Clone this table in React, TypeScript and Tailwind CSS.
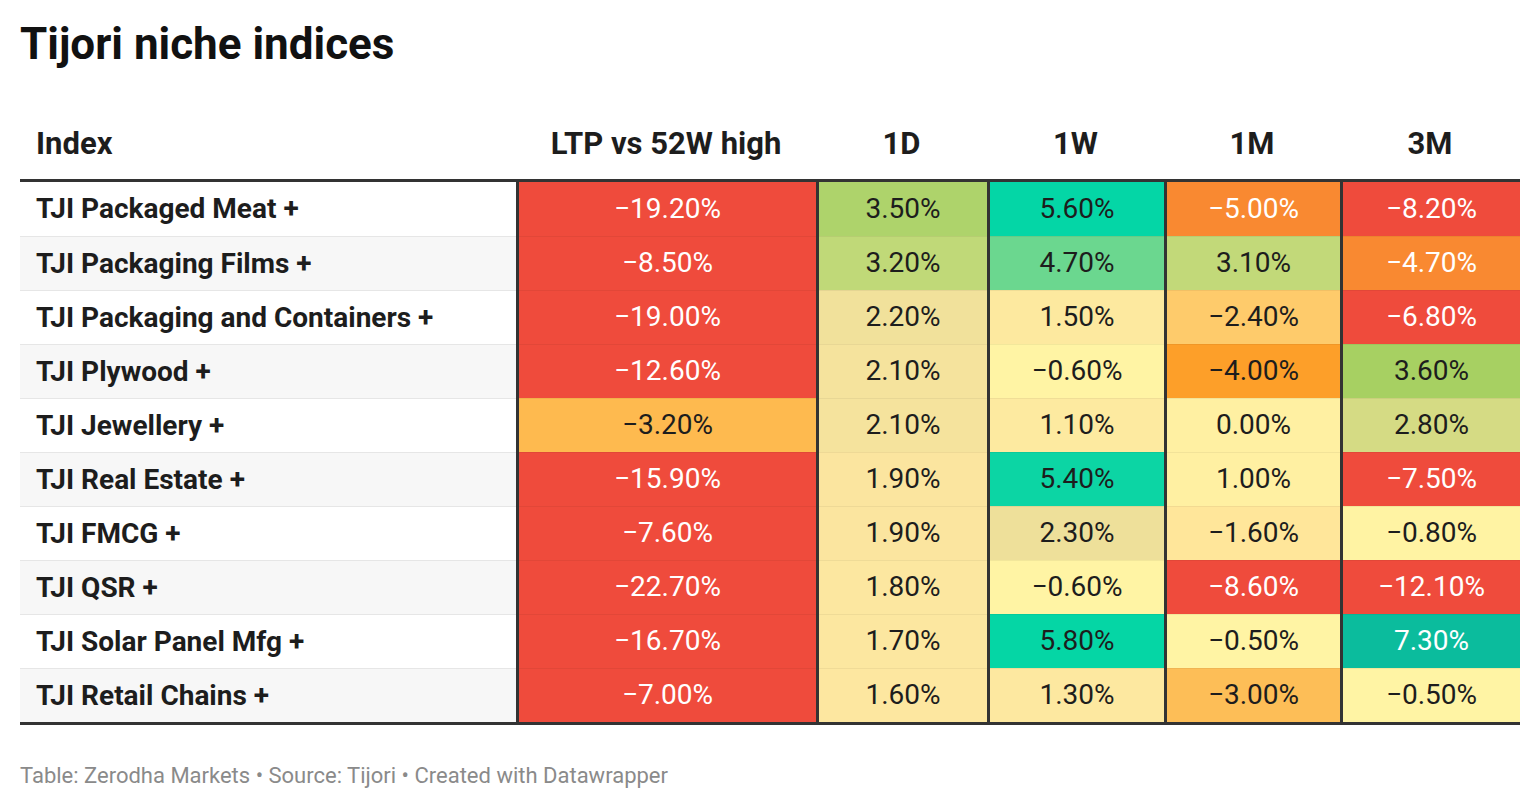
import React from "react";

type Cell = { v: string; bg: string; light?: boolean };

const RED = "#ef4b3c";
const ORANGE = "#f98931";

const rows: { name: string; cells: Cell[] }[] = [
  {
    name: "TJI Packaged Meat +",
    cells: [
      { v: "−19.20%", bg: RED, light: true },
      { v: "3.50%", bg: "#aed36b" },
      { v: "5.60%", bg: "#04d6a6" },
      { v: "−5.00%", bg: ORANGE, light: true },
      { v: "−8.20%", bg: RED, light: true },
    ],
  },
  {
    name: "TJI Packaging Films +",
    cells: [
      { v: "−8.50%", bg: RED, light: true },
      { v: "3.20%", bg: "#c0d978" },
      { v: "4.70%", bg: "#6bd78f" },
      { v: "3.10%", bg: "#c2d979" },
      { v: "−4.70%", bg: ORANGE, light: true },
    ],
  },
  {
    name: "TJI Packaging and Containers +",
    cells: [
      { v: "−19.00%", bg: RED, light: true },
      { v: "2.20%", bg: "#f1e19b" },
      { v: "1.50%", bg: "#fde99f" },
      { v: "−2.40%", bg: "#fecb6b" },
      { v: "−6.80%", bg: RED, light: true },
    ],
  },
  {
    name: "TJI Plywood +",
    cells: [
      { v: "−12.60%", bg: RED, light: true },
      { v: "2.10%", bg: "#f5e39d" },
      { v: "−0.60%", bg: "#fff4a4" },
      { v: "−4.00%", bg: "#fd9f29" },
      { v: "3.60%", bg: "#a7d062" },
    ],
  },
  {
    name: "TJI Jewellery +",
    cells: [
      { v: "−3.20%", bg: "#feba4f" },
      { v: "2.10%", bg: "#f5e39d" },
      { v: "1.10%", bg: "#fdeaa0" },
      { v: "0.00%", bg: "#fff0a2" },
      { v: "2.80%", bg: "#d5db84" },
    ],
  },
  {
    name: "TJI Real Estate +",
    cells: [
      { v: "−15.90%", bg: RED, light: true },
      { v: "1.90%", bg: "#fbe59f" },
      { v: "5.40%", bg: "#0cd5a4" },
      { v: "1.00%", bg: "#fff0a2" },
      { v: "−7.50%", bg: RED, light: true },
    ],
  },
  {
    name: "TJI FMCG +",
    cells: [
      { v: "−7.60%", bg: RED, light: true },
      { v: "1.90%", bg: "#fbe59f" },
      { v: "2.30%", bg: "#eee09a" },
      { v: "−1.60%", bg: "#ffe69a" },
      { v: "−0.80%", bg: "#fff3a3" },
    ],
  },
  {
    name: "TJI QSR +",
    cells: [
      { v: "−22.70%", bg: RED, light: true },
      { v: "1.80%", bg: "#fce7a0" },
      { v: "−0.60%", bg: "#fff4a4" },
      { v: "−8.60%", bg: RED, light: true },
      { v: "−12.10%", bg: RED, light: true },
    ],
  },
  {
    name: "TJI Solar Panel Mfg +",
    cells: [
      { v: "−16.70%", bg: RED, light: true },
      { v: "1.70%", bg: "#fce7a0" },
      { v: "5.80%", bg: "#05d6a5" },
      { v: "−0.50%", bg: "#fff4a4" },
      { v: "7.30%", bg: "#0bbc9d", light: true },
    ],
  },
  {
    name: "TJI Retail Chains +",
    cells: [
      { v: "−7.00%", bg: RED, light: true },
      { v: "1.60%", bg: "#fde7a0" },
      { v: "1.30%", bg: "#fde8a0" },
      { v: "−3.00%", bg: "#fdbe57" },
      { v: "−0.50%", bg: "#fff4a4" },
    ],
  },
];

const headers = ["LTP vs 52W high", "1D", "1W", "1M", "3M"];

export default function App() {
  return (
    <div
      className="w-[1540px] h-[810px] bg-white px-[20px] overflow-hidden"
      style={{ fontFamily: "Roboto, 'Liberation Sans', sans-serif" }}
    >
      <h1 className="pt-[18px] text-[44px] leading-[52px] font-bold text-[#111]">
        Tijori niche indices
      </h1>

      <div className="w-[1500px]">
        <div className="mt-[56px] grid grid-cols-[496px_300px_171px_177px_176px_180px] border-b-[3px] border-[#333] pb-[17px] text-[31px] leading-[36px] font-bold text-[#1d1d1d]">
          <div className="pl-[16px]">Index</div>
          {headers.map((h) => (
            <div key={h} className="text-center">
              {h}
            </div>
          ))}
        </div>

        <div className="border-b-[3px] border-[#333]">
          {rows.map((r, i) => (
            <div
              key={r.name}
              className="grid grid-cols-[496px_300px_171px_177px_176px_180px] h-[54px]"
            >
              <div
                className={`flex items-center pl-[16px] text-[28px] font-bold text-[#1d1d1d] ${
                  i % 2 === 1 ? "bg-[#f7f7f7]" : "bg-white"
                } ${i > 0 ? "border-t border-[#e6e6e6]" : ""}`}
              >
                {r.name}
              </div>
              {r.cells.map((c, j) => (
                <div
                  key={j}
                  className="border-l-[3px] border-[#333] relative flex items-center justify-center text-[28px]"
                  style={{ backgroundColor: c.bg }}
                >
                  {i > 0 && (
                    <div className="absolute left-0 right-0 top-0 h-px bg-black/5" />
                  )}
                  <span className={c.light ? "text-white" : "text-[#1d1d1d]"}>
                    {c.v}
                  </span>
                </div>
              ))}
            </div>
          ))}
        </div>

        <div className="mt-[38px] text-[22px] leading-[26px] text-[#8a8a8a]">
          Table: Zerodha Markets • Source: Tijori • Created with Datawrapper
        </div>
      </div>
    </div>
  );
}
